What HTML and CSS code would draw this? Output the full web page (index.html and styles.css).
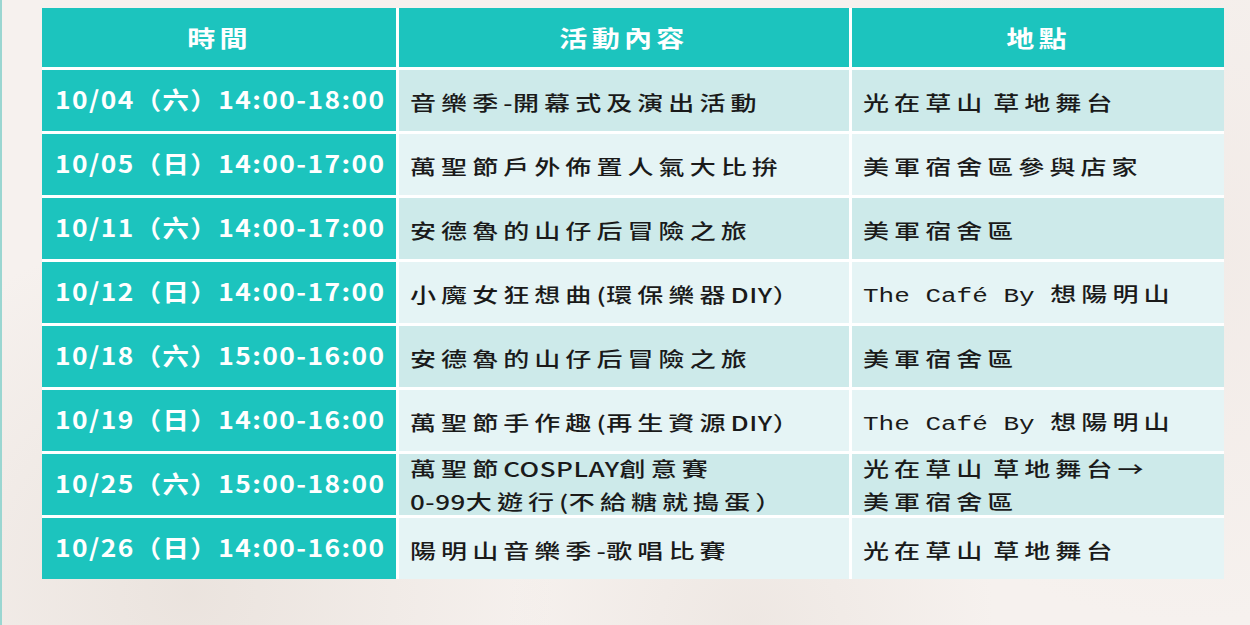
FILE: index.html
```html
<!DOCTYPE html>
<html lang="zh-Hant">
<head>
<meta charset="utf-8">
<title>活動時間表</title>
<link rel="stylesheet" href="styles.css">
</head>
<body>
<div class="page">
  <div class="schedule">
    <div class="cell head"><span class="tx">時間</span></div>
    <div class="cell head"><span class="tx">活動內容</span></div>
    <div class="cell head"><span class="tx">地點</span></div>

    <div class="cell time"><span class="tx">10/04（六）14:00-18:00</span></div>
    <div class="cell odd"><span class="tx">音樂季<span class="lat">-</span>開幕式及演出活動</span></div>
    <div class="cell odd"><span class="tx">光在草山<span class="sp"> </span>草地舞台</span></div>

    <div class="cell time"><span class="tx">10/05（日）14:00-17:00</span></div>
    <div class="cell even"><span class="tx">萬聖節戶外佈置人氣大比拚</span></div>
    <div class="cell even"><span class="tx">美軍宿舍區參與店家</span></div>

    <div class="cell time"><span class="tx">10/11（六）14:00-17:00</span></div>
    <div class="cell odd"><span class="tx">安德魯的山仔后冒險之旅</span></div>
    <div class="cell odd"><span class="tx">美軍宿舍區</span></div>

    <div class="cell time"><span class="tx">10/12（日）14:00-17:00</span></div>
    <div class="cell even"><span class="tx">小魔女狂想曲<span class="lat">(</span>環保樂器<span class="lat">DIY</span>）</span></div>
    <div class="cell even"><span class="tx"><span class="mono">The Café By </span>想陽明山</span></div>

    <div class="cell time"><span class="tx">10/18（六）15:00-16:00</span></div>
    <div class="cell odd"><span class="tx">安德魯的山仔后冒險之旅</span></div>
    <div class="cell odd"><span class="tx">美軍宿舍區</span></div>

    <div class="cell time"><span class="tx">10/19（日）14:00-16:00</span></div>
    <div class="cell even"><span class="tx">萬聖節手作趣<span class="lat">(</span>再生資源<span class="lat">DIY</span>）</span></div>
    <div class="cell even"><span class="tx"><span class="mono">The Café By </span>想陽明山</span></div>

    <div class="cell time"><span class="tx">10/25（六）15:00-18:00</span></div>
    <div class="cell odd two"><span class="tx">萬聖節<span class="lat">COSPLAY</span>創意賽<br><span class="lat">0-99</span>大遊行<span class="lat">(</span>不給糖就搗蛋）</span></div>
    <div class="cell odd two"><span class="tx">光在草山<span class="sp"> </span>草地舞台<span class="lat">→</span><br>美軍宿舍區</span></div>

    <div class="cell time"><span class="tx">10/26（日）14:00-16:00</span></div>
    <div class="cell even"><span class="tx">陽明山音樂季<span class="lat">-</span>歌唱比賽</span></div>
    <div class="cell even"><span class="tx">光在草山<span class="sp"> </span>草地舞台</span></div>
  </div>
</div>
</body>
</html>
```

FILE: styles.css
```css
html, body {
  margin: 0;
  padding: 0;
}
body {
  width: 1250px;
  height: 625px;
  overflow: hidden;
  background: #f5f0ed;
  font-family: "Noto Sans CJK TC", "Noto Sans", sans-serif;
}
.page {
  height: 625px;
  box-sizing: border-box;
  padding: 8px 0 0 40px;
  border-left: 2px solid #9ad6d1;
  background:
    radial-gradient(circle at 15% 95%, rgba(232,224,218,0.8), transparent 30%),
    radial-gradient(circle at 60% 100%, rgba(236,229,224,0.8), transparent 25%),
    radial-gradient(circle at 95% 40%, rgba(240,232,228,0.7), transparent 30%),
    #f6f1ee;
}
.schedule {
  display: grid;
  width: 1182px;
  grid-template-columns: 354px 450px 372px;
  grid-template-rows: 59px repeat(8, 61px);
  gap: 3px;
  background: #ffffff;
}
.cell {
  display: flex;
  align-items: center;
  box-sizing: border-box;
  padding: 5px 0 0 11px;
  font-size: 20px;
  font-weight: 500;
  color: #1a1a1a;
  white-space: nowrap;
}
.tx {
  display: inline-block;
  transform: scaleX(1.3);
  transform-origin: 0 50%;
  letter-spacing: 3.9px;
  line-height: 1.3;
}
.head {
  background: #1cc4be;
  color: #ffffff;
  font-weight: 700;
  justify-content: center;
  font-size: 23px;
  padding: 0;
}
.head .tx {
  transform: scaleX(1.22);
  transform-origin: 50% 50%;
  letter-spacing: 3.5px;
}
.time {
  background: #1cc4be;
  color: #ffffff;
  font-weight: 700;
  font-size: 24px;
  padding: 0 0 3px 13px;
}
.time .tx {
  transform: scaleX(1.1);
  letter-spacing: 1.3px;
}
.odd {
  background: #cdeaea;
}
.even {
  background: #e5f4f5;
}
.two {
  padding-top: 0;
}
.two .tx {
  line-height: 33px;
}
.lat {
  letter-spacing: 0.4px;
}
.sp {
  letter-spacing: 0;
}
.mono {
  font-family: "Liberation Mono", "DejaVu Sans Mono", monospace;
  font-weight: 400;
  letter-spacing: 0;
  white-space: pre;
}
```
